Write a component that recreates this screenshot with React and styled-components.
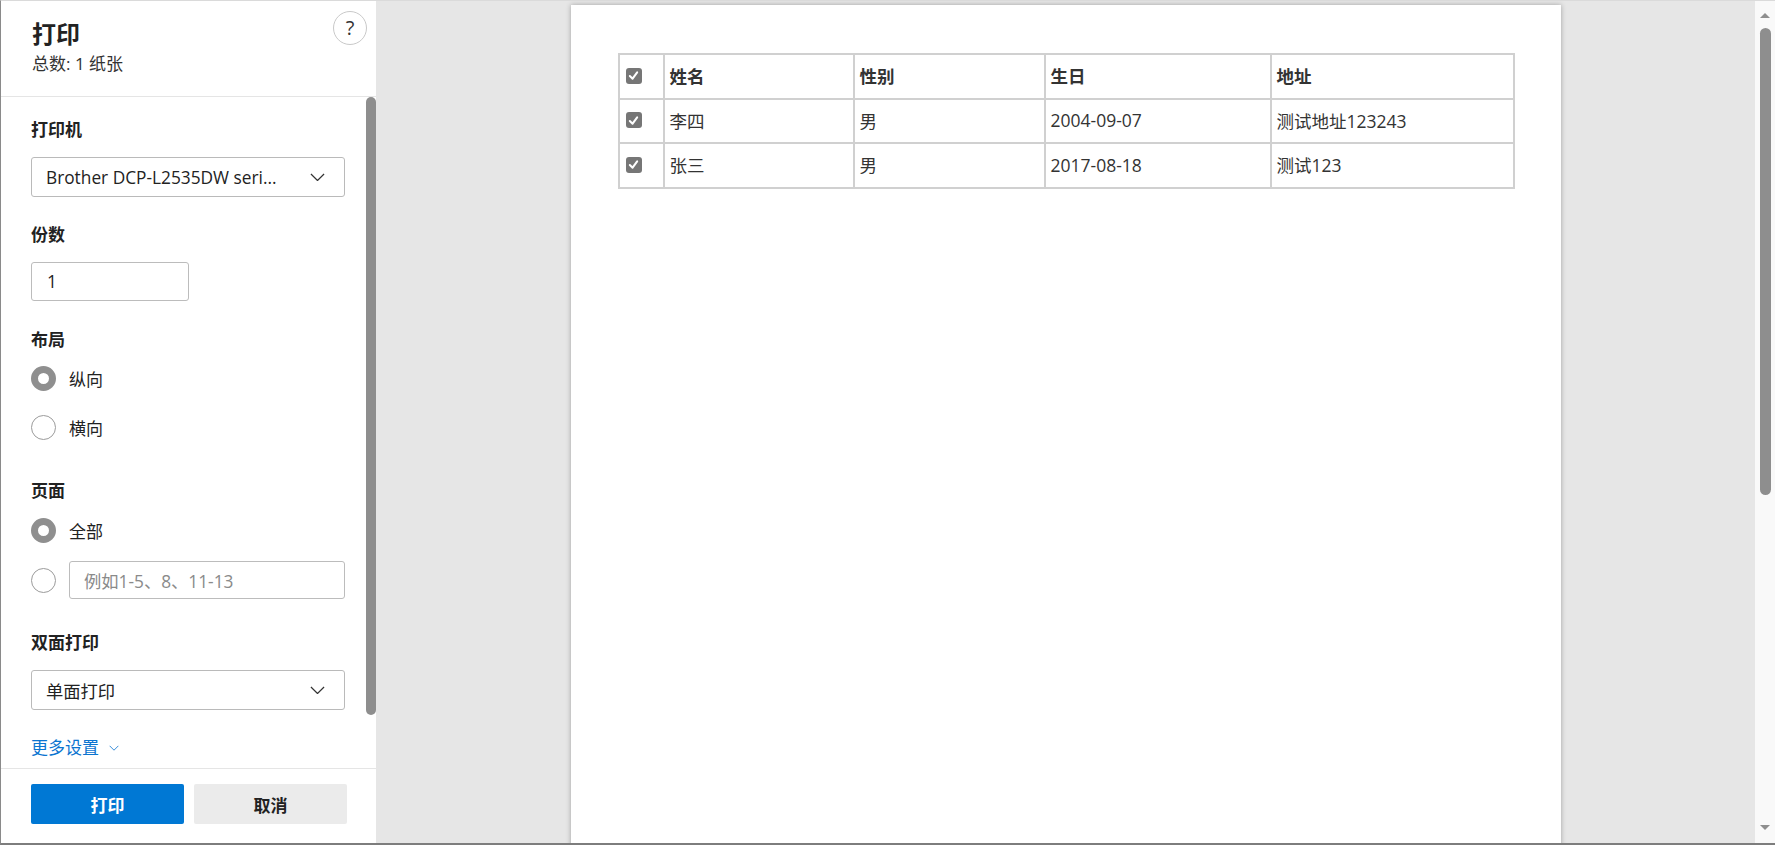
import React from "react";
import styled, { createGlobalStyle } from "styled-components";

const GlobalStyle = createGlobalStyle`
  html, body {
    margin: 0;
    padding: 0;
    height: 100%;
  }
  body {
    font-family: "Open Sans", "Noto Sans CJK SC", sans-serif;
    color: #222;
    overflow: hidden;
  }
  #root {
    height: 100%;
  }
`;

const Window = styled.div`
  display: flex;
  width: 1775px;
  height: 845px;
  box-sizing: border-box;
  border-top: 1px solid #dadada;
  border-left: 1px solid #8a8a8a;
  border-bottom: 2px solid #7d7d7d;
  background: #e6e6e6;
  overflow: hidden;
`;

/* ---------- sidebar ---------- */

const Sidebar = styled.aside`
  width: 375px;
  flex-shrink: 0;
  display: flex;
  flex-direction: column;
  background: #fff;
`;

const Header = styled.header`
  height: 95px;
  flex-shrink: 0;
  display: flex;
  justify-content: space-between;
  align-items: flex-start;
  padding: 0 9px 0 31px;
  border-bottom: 1px solid #e5e5e5;
`;

const TitleBlock = styled.div`
  padding-top: 17px;
`;

const Title = styled.h1`
  margin: 0;
  font-size: 24px;
  line-height: 32px;
  font-weight: 700;
  color: #222;
`;

const SubTitle = styled.p`
  margin: 3px 0 0;
  font-size: 17px;
  line-height: 22px;
  color: #333;
`;

const HelpButton = styled.button`
  margin-top: 10px;
  width: 34px;
  height: 34px;
  border-radius: 50%;
  border: 1px solid #c9c9c9;
  background: #fff;
  color: #333;
  font-family: "Open Sans", sans-serif;
  font-size: 20px;
  line-height: 1;
  padding: 0;
  display: flex;
  align-items: center;
  justify-content: center;
`;

const ScrollArea = styled.div`
  flex: 1;
  min-height: 0;
  display: flex;
`;

const Content = styled.div`
  flex: 1;
  padding: 22px 0 0 30px;
`;

const ScrollTrack = styled.div`
  width: 10px;
  flex-shrink: 0;
`;

const ScrollThumb = styled.div`
  height: 618px;
  border-radius: 5px;
  background: #8e8e8e;
`;

const Label = styled.div`
  margin-top: ${(p) => p.$mt || 0}px;
  font-size: 17px;
  line-height: 22px;
  font-weight: 700;
  color: #222;
`;

const SelectBox = styled.div`
  margin-top: 16px;
  width: 314px;
  height: 40px;
  box-sizing: border-box;
  border: 1px solid #bababa;
  border-radius: 3px;
  padding: 0 19px 0 14px;
  display: flex;
  align-items: center;
  justify-content: space-between;
  font-size: 17.3px;
  color: #222;
  white-space: nowrap;
`;

const TextBox = styled.div`
  margin-top: ${(p) => p.$mt || 0}px;
  width: ${(p) => p.$w}px;
  height: ${(p) => p.$h}px;
  box-sizing: border-box;
  border: 1px solid #bcbcbc;
  border-radius: 3px;
  padding-left: ${(p) => p.$pl || 15}px;
  display: flex;
  align-items: center;
  font-size: 17.3px;
  color: ${(p) => (p.$placeholder ? "#8a8a8a" : "#222")};
`;

const RadioRow = styled.div`
  margin-top: ${(p) => p.$mt}px;
  height: ${(p) => p.$h || 30}px;
  display: flex;
  align-items: center;
  gap: 13px;
  font-size: 17px;
  color: #222;
`;

const Radio = styled.span`
  width: 25px;
  height: 25px;
  box-sizing: border-box;
  border-radius: 50%;
  background: #fff;
  border: ${(p) => (p.$checked ? "7px solid #8f8f8f" : "1px solid #9b9b9b")};
  flex-shrink: 0;
`;

const MoreLink = styled.a`
  margin-top: 27px;
  display: flex;
  align-items: center;
  gap: 10px;
  font-size: 17px;
  line-height: 22px;
  color: #0b74d0;
  text-decoration: none;
`;

const Footer = styled.footer`
  height: 75px;
  flex-shrink: 0;
  box-sizing: border-box;
  border-top: 1px solid #e5e5e5;
  padding: 15px 0 0 30px;
  display: flex;
  gap: 10px;
`;

const ActionButton = styled.button`
  width: 153px;
  height: 40px;
  border: none;
  border-radius: 2px;
  font-family: "Open Sans", "Noto Sans CJK SC", sans-serif;
  font-size: 17px;
  font-weight: 700;
  background: ${(p) => (p.$primary ? "#0078d4" : "#ebebeb")};
  color: ${(p) => (p.$primary ? "#fff" : "#222")};
`;

/* ---------- preview ---------- */

const Preview = styled.main`
  flex: 1;
  display: flex;
  justify-content: center;
  padding-top: 4px;
  overflow: hidden;
`;

const Paper = styled.div`
  width: 990px;
  height: 900px;
  background: #fff;
  box-shadow: 0 0 5px rgba(0, 0, 0, 0.3);
  box-sizing: border-box;
  padding: 48px 0 0 47px;
`;

const Table = styled.table`
  width: 897px;
  table-layout: fixed;
  border-collapse: collapse;
  font-size: 17.5px;
  color: #333;
`;

const Cell = styled.td`
  height: 41.5px;
  padding: 0 5px 1px;
  border: 2px solid #d0d0d0;
  font-weight: ${(p) => (p.$head ? 700 : 400)};
  white-space: nowrap;
  vertical-align: middle;
`;

const Check = styled.span`
  display: flex;
  align-items: center;
  justify-content: center;
  margin-left: 1px;
  width: 16px;
  height: 16px;
  border-radius: 3px;
  background: #767676;
`;

const PageScrollbar = styled.div`
  width: 20px;
  flex-shrink: 0;
  background: #f9f9f9;
  display: flex;
  flex-direction: column;
  align-items: center;
`;

const Arrow = styled.span`
  width: 0;
  height: 0;
  margin: ${(p) => (p.$down ? "auto 0 13px" : "12px 0 10px")};
  border-left: 5px solid transparent;
  border-right: 5px solid transparent;
  ${(p) =>
    p.$down ? "border-top: 5px solid #8e8e8e;" : "border-bottom: 5px solid #8e8e8e;"}
`;

const PageThumb = styled.div`
  width: 11px;
  height: 467px;
  border-radius: 6px;
  background: #8e8e8e;
`;

const Chevron = ({ size = 15, color = "#333" }) => (
  <svg width={size} height={size / 2 + 1} viewBox="0 0 16 9" fill="none">
    <polyline points="1,1 8,8 15,1" stroke={color} strokeWidth="1.3" />
  </svg>
);

const CheckMark = () => (
  <svg width="11" height="11" viewBox="0 0 12 12">
    <polyline
      points="2,6.5 5,9.5 10,2.5"
      fill="none"
      stroke="#fff"
      strokeWidth="2.2"
      strokeLinecap="round"
      strokeLinejoin="round"
    />
  </svg>
);

const rows = [
  { name: "李四", sex: "男", birthday: "2004-09-07", address: "测试地址123243" },
  { name: "张三", sex: "男", birthday: "2017-08-18", address: "测试123" },
];

export default function App() {
  return (
    <>
      <GlobalStyle />
      <Window>
        <Sidebar>
          <Header>
            <TitleBlock>
              <Title>打印</Title>
              <SubTitle>总数: 1 纸张</SubTitle>
            </TitleBlock>
            <HelpButton>?</HelpButton>
          </Header>

          <ScrollArea>
            <Content>
              <Label>打印机</Label>
              <SelectBox>
                <span>Brother DCP-L2535DW seri...</span>
                <Chevron />
              </SelectBox>

              <Label $mt={27}>份数</Label>
              <TextBox $mt={16} $w={158} $h={39}>
                1
              </TextBox>

              <Label $mt={28}>布局</Label>
              <RadioRow $mt={12}>
                <Radio $checked />
                纵向
              </RadioRow>
              <RadioRow $mt={19}>
                <Radio />
                横向
              </RadioRow>

              <Label $mt={38}>页面</Label>
              <RadioRow $mt={13}>
                <Radio $checked />
                全部
              </RadioRow>
              <RadioRow $mt={16} $h={38}>
                <Radio />
                <TextBox $w={276} $h={38} $pl={14} $placeholder>
                  例如1-5、8、11-13
                </TextBox>
              </RadioRow>

              <Label $mt={33}>双面打印</Label>
              <SelectBox>
                <span>单面打印</span>
                <Chevron />
              </SelectBox>

              <MoreLink href="#">
                更多设置
                <Chevron size={10} color="#0b74d0" />
              </MoreLink>
            </Content>
            <ScrollTrack>
              <ScrollThumb />
            </ScrollTrack>
          </ScrollArea>

          <Footer>
            <ActionButton $primary>打印</ActionButton>
            <ActionButton>取消</ActionButton>
          </Footer>
        </Sidebar>

        <Preview>
          <Paper>
            <Table>
              <colgroup>
                <col style={{ width: 45 }} />
                <col style={{ width: 190 }} />
                <col style={{ width: 191 }} />
                <col style={{ width: 226 }} />
                <col style={{ width: 243 }} />
              </colgroup>
              <tbody>
                <tr>
                  <Cell $head>
                    <Check>
                      <CheckMark />
                    </Check>
                  </Cell>
                  <Cell $head>姓名</Cell>
                  <Cell $head>性别</Cell>
                  <Cell $head>生日</Cell>
                  <Cell $head>地址</Cell>
                </tr>
                {rows.map((r) => (
                  <tr key={r.name}>
                    <Cell>
                      <Check>
                        <CheckMark />
                      </Check>
                    </Cell>
                    <Cell>{r.name}</Cell>
                    <Cell>{r.sex}</Cell>
                    <Cell>{r.birthday}</Cell>
                    <Cell>{r.address}</Cell>
                  </tr>
                ))}
              </tbody>
            </Table>
          </Paper>
        </Preview>

        <PageScrollbar>
          <Arrow />
          <PageThumb />
          <Arrow $down />
        </PageScrollbar>
      </Window>
    </>
  );
}
